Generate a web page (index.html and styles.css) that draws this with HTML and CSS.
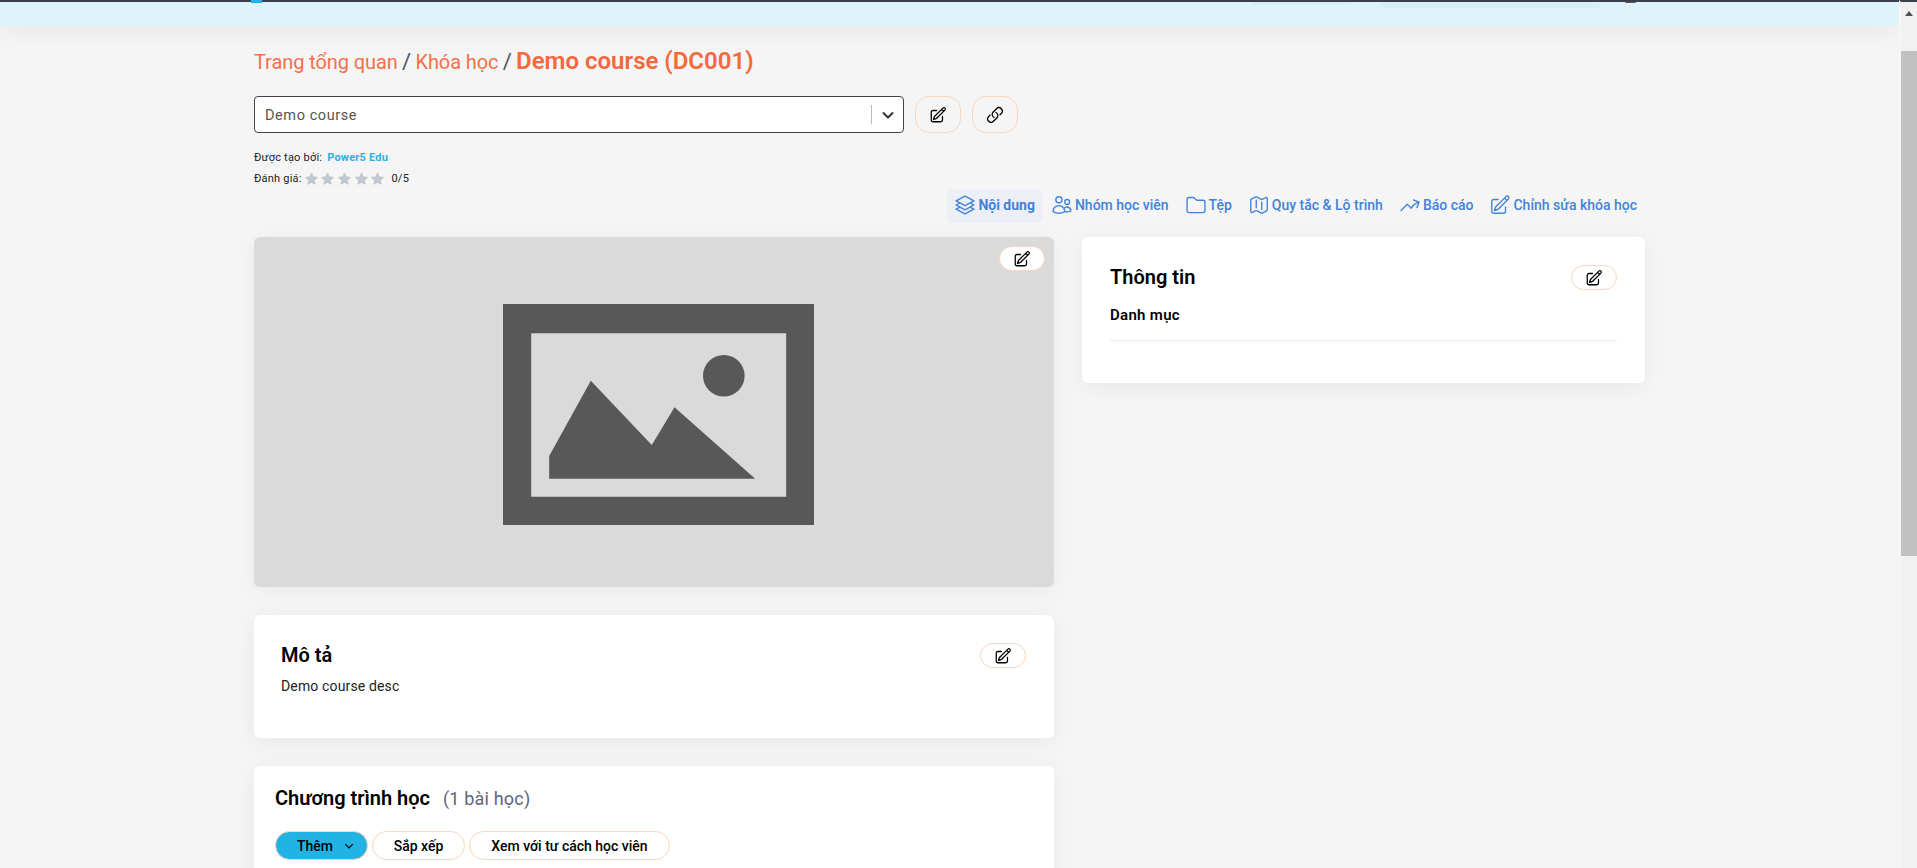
FILE: index.html
```html
<!DOCTYPE html>
<html lang="vi">
<head>
<meta charset="utf-8">
<title>Demo course</title>
<link rel="stylesheet" href="styles.css">
</head>
<body>
<div class="viewport">
  <div class="page">
    <header class="topbar">
      <span class="bit-blue"></span>
      <span class="bit-pale-a"></span>
      <span class="bit-pale-b"></span>
      <span class="bit-dark"></span>
    </header>
    <main class="content">
      <nav class="crumbs"><a class="crumb-link">Trang tổng quan</a> <span class="sep">/</span> <a class="crumb-link">Khóa học</a> <span class="sep">/</span> <strong class="crumb-current">Demo course (DC001)</strong></nav>
      <div class="select-row">
        <div class="select">
          <span class="select-value">Demo course</span>
          <span class="select-sep"></span>
          <svg class="select-chev" viewBox="0 0 24 24"><path d="M19.5 8.25l-7.5 7.5-7.5-7.5"/></svg>
        </div>
        <button class="btn-square"><svg class="ico" viewBox="0 0 24 24"><path d="M16.862 4.487l1.687-1.688a1.875 1.875 0 112.652 2.652L10.582 16.07a4.5 4.5 0 01-1.897 1.13L6 18l.8-2.685a4.5 4.5 0 011.13-1.897l8.932-8.931zm0 0L19.5 7.125M18 14v4.75A2.25 2.25 0 0115.75 21H5.25A2.25 2.25 0 013 18.75V8.25A2.25 2.25 0 015.25 6H10"/></svg></button>
        <button class="btn-square"><svg class="ico" viewBox="0 0 24 24"><path d="M13.19 8.688a4.5 4.5 0 011.242 7.244l-4.5 4.5a4.5 4.5 0 01-6.364-6.364l1.757-1.757m13.35-.622l1.757-1.757a4.5 4.5 0 00-6.364-6.364l-4.5 4.5a4.5 4.5 0 001.242 7.244"/></svg></button>
      </div>
      <p class="meta meta-by">Được tạo bởi: <a class="meta-link">Power5 Edu</a></p>
      <div class="meta meta-rate">
        <span>Đánh giá:</span>
        <span class="stars">
          <svg viewBox="0 0 20 20"><path d="M10.868 2.884c-.321-.772-1.415-.772-1.736 0l-1.83 4.401-4.753.381c-.833.067-1.171 1.107-.536 1.651l3.62 3.102-1.106 4.637c-.194.813.691 1.456 1.405 1.02L10 15.591l4.069 2.485c.713.436 1.598-.207 1.404-1.02l-1.106-4.637 3.62-3.102c.635-.544.297-1.584-.536-1.65l-4.752-.382-1.831-4.401z"/></svg>
          <svg viewBox="0 0 20 20"><path d="M10.868 2.884c-.321-.772-1.415-.772-1.736 0l-1.83 4.401-4.753.381c-.833.067-1.171 1.107-.536 1.651l3.62 3.102-1.106 4.637c-.194.813.691 1.456 1.405 1.02L10 15.591l4.069 2.485c.713.436 1.598-.207 1.404-1.02l-1.106-4.637 3.62-3.102c.635-.544.297-1.584-.536-1.65l-4.752-.382-1.831-4.401z"/></svg>
          <svg viewBox="0 0 20 20"><path d="M10.868 2.884c-.321-.772-1.415-.772-1.736 0l-1.83 4.401-4.753.381c-.833.067-1.171 1.107-.536 1.651l3.62 3.102-1.106 4.637c-.194.813.691 1.456 1.405 1.02L10 15.591l4.069 2.485c.713.436 1.598-.207 1.404-1.02l-1.106-4.637 3.62-3.102c.635-.544.297-1.584-.536-1.65l-4.752-.382-1.831-4.401z"/></svg>
          <svg viewBox="0 0 20 20"><path d="M10.868 2.884c-.321-.772-1.415-.772-1.736 0l-1.83 4.401-4.753.381c-.833.067-1.171 1.107-.536 1.651l3.62 3.102-1.106 4.637c-.194.813.691 1.456 1.405 1.02L10 15.591l4.069 2.485c.713.436 1.598-.207 1.404-1.02l-1.106-4.637 3.62-3.102c.635-.544.297-1.584-.536-1.65l-4.752-.382-1.831-4.401z"/></svg>
          <svg viewBox="0 0 20 20"><path d="M10.868 2.884c-.321-.772-1.415-.772-1.736 0l-1.83 4.401-4.753.381c-.833.067-1.171 1.107-.536 1.651l3.62 3.102-1.106 4.637c-.194.813.691 1.456 1.405 1.02L10 15.591l4.069 2.485c.713.436 1.598-.207 1.404-1.02l-1.106-4.637 3.62-3.102c.635-.544.297-1.584-.536-1.65l-4.752-.382-1.831-4.401z"/></svg>
        </span>
        <span>0/5</span>
      </div>
      <div class="tabs">
        <a class="tab tab-active"><svg class="tab-ico" viewBox="0 0 24 24"><path d="M6.429 9.75L2.25 12l4.179 2.25m0-4.5l5.571 3 5.571-3m-11.142 0L2.25 7.5 12 2.25l9.75 5.25-4.179 2.25m0 0L21.75 12l-4.179 2.25m0 0l4.179 2.25L12 21.75 2.25 16.5l4.179-2.25m11.142 0l-5.571 3-5.571-3"/></svg>Nội dung</a>
        <a class="tab"><svg class="tab-ico" viewBox="0 0 24 24"><path d="M15 19.128a9.38 9.38 0 002.625.372 9.337 9.337 0 004.121-.952 4.125 4.125 0 00-7.533-2.493M15 19.128v-.003c0-1.113-.285-2.16-.786-3.07M15 19.128v.106A12.318 12.318 0 018.624 21c-2.331 0-4.512-.645-6.374-1.766l-.001-.109a6.375 6.375 0 0111.964-3.07M12 6.375a3.375 3.375 0 11-6.75 0 3.375 3.375 0 016.75 0zm8.25 2.25a2.625 2.625 0 11-5.25 0 2.625 2.625 0 015.25 0z"/></svg>Nhóm học viên</a>
        <a class="tab"><svg class="tab-ico" viewBox="0 0 24 24"><path d="M2.25 6A2.25 2.25 0 014.5 3.750h4.379a1.5 1.5 0 011.060.44l2.122 2.120a1.5 1.5 0 001.060.44H19.500A2.250 2.250 0 0121.750 9v9a2.250 2.250 0 01-2.250 2.250h-15A2.250 2.250 0 012.250 18V6z"/></svg>Tệp</a>
        <a class="tab"><svg class="tab-ico" viewBox="0 0 24 24"><path d="M9 6.75V15m6-6v8.25m.503 3.498l4.875-2.437c.381-.19.622-.58.622-1.006V4.82c0-.836-.88-1.38-1.628-1.006l-3.869 1.934c-.317.159-.69.159-1.006 0L9.503 3.252a1.125 1.125 0 00-1.006 0L3.622 5.689C3.24 5.88 3 6.27 3 6.695V19.18c0 .836.88 1.38 1.628 1.006l3.869-1.934c.317-.159.69-.159 1.006 0l4.994 2.497c.317.158.69.158 1.006 0z"/></svg>Quy tắc &amp; Lộ trình</a>
        <a class="tab"><svg class="tab-ico" viewBox="0 0 24 24"><path d="M2.25 18L9 11.25l4.306 4.307a11.95 11.95 0 015.814-5.519l2.74-1.22m0 0l-5.94-2.28m5.94 2.28l-2.28 5.941"/></svg>Báo cáo</a>
        <a class="tab"><svg class="tab-ico" viewBox="0 0 24 24"><path d="M16.862 4.487l1.687-1.688a1.875 1.875 0 112.652 2.652L10.582 16.07a4.5 4.5 0 01-1.897 1.13L6 18l.8-2.685a4.5 4.5 0 011.13-1.897l8.932-8.931zm0 0L19.5 7.125M18 14v4.75A2.25 2.25 0 0115.75 21H5.25A2.25 2.25 0 013 18.75V8.25A2.25 2.25 0 015.25 6H10"/></svg>Chỉnh sửa khóa học</a>
      </div>
      <div class="columns">
        <div class="col-left">
          <section class="cover">
            <button class="btn-pill btn-cover"><svg class="ico" viewBox="0 0 24 24"><path d="M16.862 4.487l1.687-1.688a1.875 1.875 0 112.652 2.652L10.582 16.07a4.5 4.5 0 01-1.897 1.13L6 18l.8-2.685a4.5 4.5 0 011.13-1.897l8.932-8.931zm0 0L19.5 7.125M18 14v4.75A2.25 2.25 0 0115.75 21H5.25A2.25 2.25 0 013 18.75V8.25A2.25 2.25 0 015.25 6H10"/></svg></button>
            <svg class="placeholder" viewBox="0 0 311 221"><path fill-rule="evenodd" d="M0 0H311V221H0ZM28.200 29.300V192.700H283.200V29.300Z"/><circle cx="220.800" cy="71.700" r="20.800"/><path d="M46.200 174.700V152L87.800 76.700 148.800 141 171.500 103.300 252.200 174.700Z"/></svg>
          </section>
          <section class="card card-desc">
            <div class="card-head">
              <h2 class="card-title">Mô tả</h2>
              <button class="btn-pill"><svg class="ico" viewBox="0 0 24 24"><path d="M16.862 4.487l1.687-1.688a1.875 1.875 0 112.652 2.652L10.582 16.07a4.5 4.5 0 01-1.897 1.13L6 18l.8-2.685a4.5 4.5 0 011.13-1.897l8.932-8.931zm0 0L19.5 7.125M18 14v4.75A2.25 2.25 0 0115.75 21H5.25A2.25 2.25 0 013 18.75V8.25A2.25 2.25 0 015.25 6H10"/></svg></button>
            </div>
            <p class="desc">Demo course desc</p>
          </section>
          <section class="card card-program">
            <div class="program-head">
              <h2 class="card-title">Chương trình học</h2>
              <span class="lesson-count">(1 bài học)</span>
            </div>
            <div class="program-actions">
              <button class="btn-action btn-primary">Thêm<svg class="btn-chev" viewBox="0 0 24 24"><path d="M19.5 8.25l-7.5 7.5-7.5-7.5"/></svg></button>
              <button class="btn-action btn-sort">Sắp xếp</button>
              <button class="btn-action btn-view">Xem với tư cách học viên</button>
            </div>
          </section>
        </div>
        <aside class="card card-info">
          <div class="card-head">
            <h2 class="card-title">Thông tin</h2>
            <button class="btn-pill"><svg class="ico" viewBox="0 0 24 24"><path d="M16.862 4.487l1.687-1.688a1.875 1.875 0 112.652 2.652L10.582 16.07a4.5 4.5 0 01-1.897 1.13L6 18l.8-2.685a4.5 4.5 0 011.13-1.897l8.932-8.931zm0 0L19.5 7.125M18 14v4.75A2.25 2.25 0 0115.75 21H5.25A2.25 2.25 0 013 18.75V8.25A2.25 2.25 0 015.25 6H10"/></svg></button>
          </div>
          <p class="info-label">Danh mục</p>
          <hr class="info-rule">
        </aside>
      </div>
    </main>
  </div>
  <div class="scrollbar">
    <span class="scroll-arrow"></span>
    <span class="scroll-thumb"></span>
  </div>
</div>
</body>
</html>
```
FILE: styles.css
```css
* { box-sizing: border-box; }
html, body { margin: 0; height: 100%; overflow: hidden; }
body { font-family: Roboto, "Noto Sans", sans-serif; background: #f5f5f5; color: #000; }
button { font-family: inherit; cursor: pointer; padding: 0; }
h2, p { margin: 0; }

.viewport { display: flex; height: 868px; }
.page { flex: 1; min-width: 0; overflow: hidden; }

.topbar { display: flex; align-items: flex-start; height: 26px; background: #dff3fa; border-top: 2px solid #3b404d; box-shadow: 0 6px 24px rgba(0, 0, 0, .06); position: relative; padding-left: 251px; }
.bit-blue { width: 11px; height: 3px; margin-top: -2px; background: #23b2e3; }
.bit-pale-a { width: 101px; height: 3px; margin-left: 988px; background: #d8edf4; border-radius: 0 0 4px 4px; }
.bit-pale-b { width: 221px; height: 6px; margin-left: 29px; background: #d8edf4; border-radius: 0 0 6px 6px; }
.bit-dark { width: 11px; height: 1px; margin-left: 24px; background: #5a5a5a; border-radius: 0 0 5px 5px; }

.content { width: 1391px; margin: 0 auto; padding-top: 21px; }

.crumbs { height: 28px; line-height: 28px; font-size: 20px; letter-spacing: -.004em; white-space: nowrap; }
.crumb-link { color: #f4704a; }
.sep { margin: 0 -.6px; font-size: 22px; color: #4b5563; }
.crumb-current { color: #f4693c; font-size: 24px; font-weight: 600; letter-spacing: 0; }

.select-row { display: flex; gap: 11px; margin-top: 21px; }
.select { display: flex; align-items: center; width: 650px; height: 37px; padding-left: 10px; background: #fff; border: 1px solid #444; border-radius: 4px; }
.select-value { flex: 1; padding-top: 2px; font-size: 14.5px; letter-spacing: .04em; color: #555; }
.select-sep { width: 1px; height: 19px; background: #bbb; }
.select-chev { width: 16px; height: 16px; margin: 0 7px 0 8px; fill: none; stroke: #333; stroke-width: 3; }
.btn-square { display: flex; align-items: center; justify-content: center; width: 46px; height: 37px; background: transparent; border: 1px solid #fdd5ba; border-radius: 14px; }
.ico { width: 18px; height: 18px; fill: none; stroke: #000; stroke-width: 1.7; stroke-linecap: round; stroke-linejoin: round; }

.meta { font-size: 11px; line-height: 16px; color: #222; letter-spacing: .02em; }
.meta-by { margin-top: 17px; }
.meta-link { margin-left: 2px; color: #2eb0e4; font-weight: 700; }
.meta-rate { display: flex; align-items: center; margin-top: 5px; gap: 2px; }
.stars { display: flex; gap: 1.7px; margin: 0 4px 1px 0; }
.stars svg { width: 15px; height: 15px; fill: #c2c6cf; }

.tabs { display: flex; justify-content: flex-end; align-items: center; gap: 1px; height: 34px; margin-top: 2px; }
.tab { display: flex; align-items: center; gap: 2px; height: 34px; padding: 0 8px 2px 7px; border-radius: 5px; font-size: 14px; font-weight: 500; color: #4383d8; white-space: nowrap; }
.tab-active { background: #ecf0f6; font-weight: 700; }
.tab-ico { width: 22px; height: 22px; fill: none; stroke: #4383d8; stroke-width: 1.5; stroke-linecap: round; stroke-linejoin: round; }

.columns { display: grid; grid-template-columns: 800px 563px; gap: 28px; margin-top: 14px; align-items: start; }
.col-left { display: flex; flex-direction: column; gap: 28px; }

.cover { position: relative; display: flex; height: 350px; background: #dadada; border-radius: 6px; box-shadow: 0 4px 24px rgba(0, 0, 0, .05); }
.placeholder { width: 311px; height: 221px; margin: 67px 0 0 249px; fill: #585858; filter: blur(.5px); }
.btn-cover { position: absolute; top: 9px; right: 9px; }

.card { background: #fff; border-radius: 6px; box-shadow: 0 4px 24px rgba(0, 0, 0, .06); }
.card-desc { height: 123px; padding: 28px 28px 0 27px; }
.card-info { height: 146px; padding: 28px 28px 0; }
.card-program { height: 300px; padding: 21px; }
.card-head { display: flex; justify-content: space-between; align-items: center; height: 25px; }
.card-title { font-size: 20px; font-weight: 600; line-height: 25px; }
.btn-pill { display: flex; align-items: center; justify-content: center; width: 46px; height: 25px; background: #fff; border: 1px solid #fdd5ba; border-radius: 13px; }
.desc { margin-top: 8px; font-size: 14px; line-height: 20px; letter-spacing: .01em; color: #222; }
.info-label { margin-top: 15px; font-size: 15px; font-weight: 600; line-height: 20px; letter-spacing: .02em; }
.info-rule { height: 1px; margin: 15px 0 0; border: 0; background: #e9e9f0; }

.program-head { display: flex; align-items: center; gap: 13px; height: 22px; }
.lesson-count { font-size: 18px; letter-spacing: .01em; color: #62647e; }
.program-actions { display: flex; gap: 4px; margin-top: 22px; }
.btn-action { display: flex; align-items: center; justify-content: center; height: 29px; font-size: 14px; font-weight: 500; background: #fff; border: 1px solid #fdd5ba; border-radius: 15px; color: #000; }
.btn-primary { width: 93px; padding-left: 9px; background: #22b3e4; }
.btn-chev { width: 12px; height: 12px; margin-left: 10px; fill: none; stroke: #000; stroke-width: 2.5; }
.btn-sort { width: 93px; }
.btn-view { width: 201px; }

.scrollbar { flex: 0 0 18px; display: flex; flex-direction: column; align-items: stretch; background: #f1f1f1; border-top: 2px solid #3b404d; border-left: 2px solid #f5f5f5; position: relative; }
.scroll-arrow { align-self: center; width: 0; height: 0; margin-top: 9px; border-left: 4px solid transparent; border-right: 4px solid transparent; border-bottom: 5px solid #505050; }
.scroll-thumb { height: 505px; margin-top: 35px; background: #c1c1c1; }
```
